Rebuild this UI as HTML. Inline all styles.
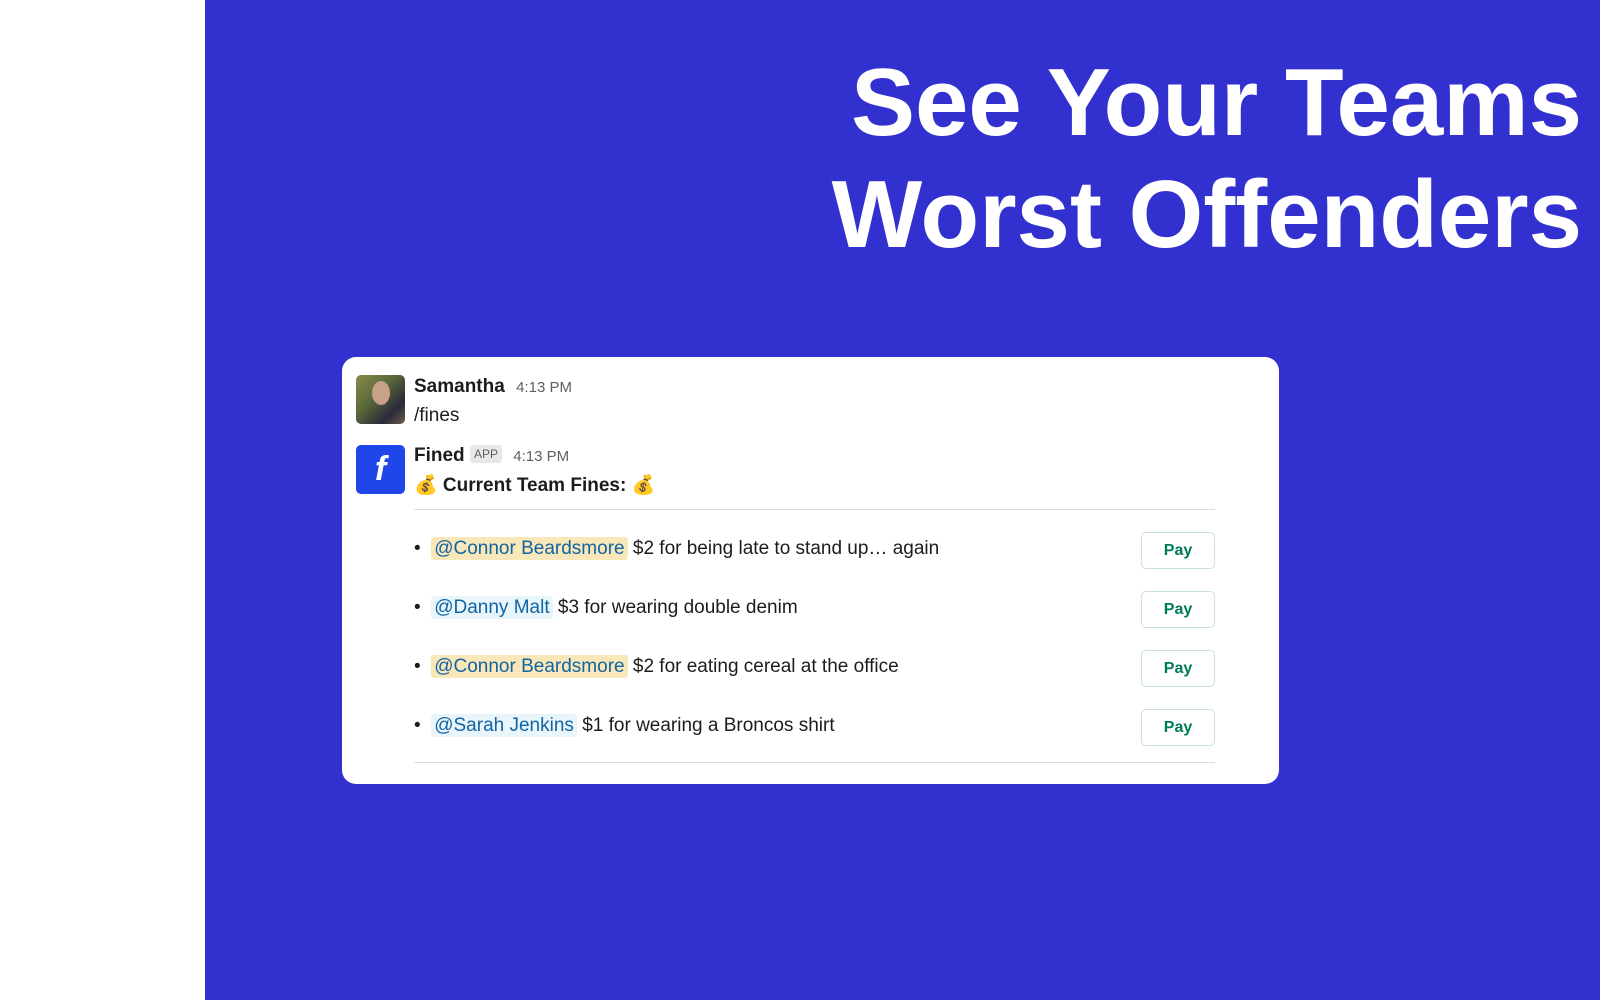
<!DOCTYPE html>
<html><head><meta charset="utf-8"><style>
*{margin:0;padding:0;box-sizing:border-box}
body{width:1600px;height:1000px;background:#fff;position:relative;overflow:hidden;font-family:"Liberation Sans",sans-serif}
.blue{position:absolute;left:205px;top:0;width:1395px;height:1000px;background:#3330d0}
.title{position:absolute;right:18px;color:#fff;font-weight:bold;font-size:96px;letter-spacing:0px;white-space:nowrap;line-height:1}
.card{position:absolute;left:342px;top:357px;width:937px;height:427px;background:#fff;border-radius:14px}
.abs{position:absolute;white-space:nowrap}
.name{font-weight:bold;font-size:19px;color:#1d1c1d}
.time{font-size:15px;color:#616061}
.txt{font-size:19px;color:#1d1c1d}
.hr{position:absolute;left:72px;width:801px;height:1px;background:#ddd}
.row{position:absolute;left:72px;font-size:19px;color:#1d1c1d;white-space:nowrap}
.m{color:#1264a3;background:#e8f5fa;padding:1px 3px;border-radius:3px}
.m.y{background:#f8e7b8}
.pay{position:absolute;left:799px;width:74px;height:37px;border:1px solid #c9e3d6;border-radius:5px;color:#007a5a;font-weight:bold;font-size:16px;text-align:center;line-height:35px}
</style></head><body>
<div class="blue"></div>
<div class="title" style="top:55px">See Your Teams</div>
<div class="title" style="top:167px">Worst Offenders</div>
<div class="card">
 <div class="abs" style="left:14px;top:18px;width:49px;height:49px;border-radius:5px;background:linear-gradient(135deg,#8a8a4a,#5a6a3a 40%,#2a2a3a 75%,#6a5a4a)"></div>
 <div class="abs" style="left:30px;top:24px;width:18px;height:24px;border-radius:50%;background:#c9a088"></div>
 <div class="abs name" style="left:72px;top:19px">Samantha <span class="time" style="font-weight:normal;margin-left:6px">4:13 PM</span></div>
 <div class="abs txt" style="left:72px;top:48px">/fines</div>
 <div class="abs" style="left:14px;top:88px;width:49px;height:49px;border-radius:5px;background:#1e46e8;color:#fff;font-weight:bold;font-style:italic;font-size:34px;text-align:center;line-height:49px">f</div>
 <div class="abs name" style="left:72px;top:88px">Fined <span style="font-weight:normal;font-size:12px;color:#616061;background:#e8e8e8;padding:2px 4px;border-radius:3px;vertical-align:3px">APP</span> <span class="time" style="font-weight:normal;margin-left:6px">4:13 PM</span></div>
 <div class="abs txt" style="left:72px;top:116px;font-weight:bold">💰 Current Team Fines: 💰</div>
 <div class="hr" style="top:152px"></div>
 <div class="row" style="top:181px">•&nbsp; <span class="m y">@Connor Beardsmore</span> $2 for being late to stand up… again</div>
 <div class="pay" style="top:175px">Pay</div>
 <div class="row" style="top:240px">•&nbsp; <span class="m">@Danny Malt</span> $3 for wearing double denim</div>
 <div class="pay" style="top:234px">Pay</div>
 <div class="row" style="top:299px">•&nbsp; <span class="m y">@Connor Beardsmore</span> $2 for eating cereal at the office</div>
 <div class="pay" style="top:293px">Pay</div>
 <div class="row" style="top:358px">•&nbsp; <span class="m">@Sarah Jenkins</span> $1 for wearing a Broncos shirt</div>
 <div class="pay" style="top:352px">Pay</div>
 <div class="hr" style="top:405px"></div>
</div>
</body></html>
